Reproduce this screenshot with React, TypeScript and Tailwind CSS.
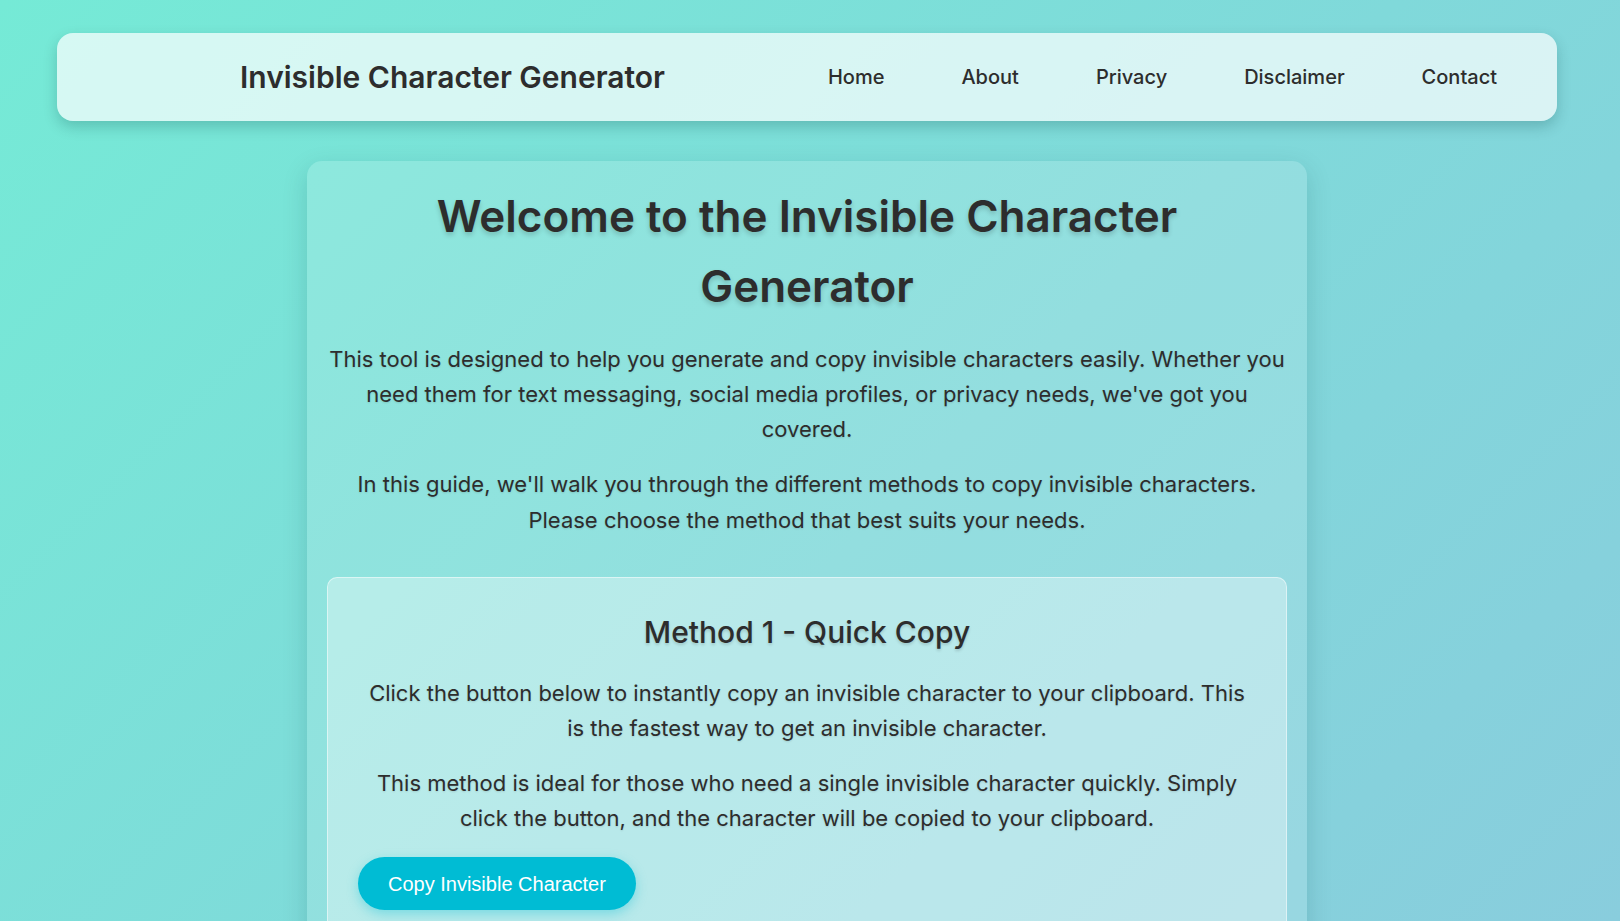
export default function App() {
  return (
    <div className="h-screen overflow-hidden bg-[linear-gradient(135deg,#75ead6_0%,#80d9da_55%,#89cddd_100%)] pr-[6px] font-['Inter',sans-serif] text-[#2d2d2d]">
      {/* Top navigation */}
      <header className="mx-auto mt-[33px] flex h-[88px] w-[1500px] items-center justify-between rounded-2xl bg-white/70 pl-[183px] pr-[60px] shadow-[0_6px_14px_rgba(0,60,60,0.22)]">
        <h1 className="text-[30px] font-semibold">Invisible Character Generator</h1>
        <nav className="flex items-center gap-[77px] text-[20px] font-medium">
          <a href="#">Home</a>
          <a href="#">About</a>
          <a href="#">Privacy</a>
          <a href="#">Disclaimer</a>
          <a href="#">Contact</a>
        </nav>
      </header>

      {/* Main card */}
      <main className="mx-auto mt-[40px] w-[1000px] rounded-[15px] bg-white/15 p-5 text-center leading-[1.6] shadow-[0_8px_24px_rgba(0,70,80,0.18)]">
        <h2 className="text-[44px] font-semibold [text-shadow:0_3px_5px_rgba(0,0,0,0.18)]">
          Welcome to the Invisible Character Generator
        </h2>
        <p className="mt-5 text-[22px] [text-shadow:0_1px_2px_rgba(0,0,0,0.12)]">
          This tool is designed to help you generate and copy invisible characters easily. Whether you need them for text
          messaging, social media profiles, or privacy needs, we've got you covered.
        </p>
        <p className="mt-5 text-[22px] [text-shadow:0_1px_2px_rgba(0,0,0,0.12)]">
          In this guide, we'll walk you through the different methods to copy invisible characters. Please choose the
          method that best suits your needs.
        </p>

        <section className="mt-[39px] rounded-[10px] border border-white/50 bg-white/35 p-[30px]">
          <h3 className="text-[30px] font-medium [text-shadow:0_2px_3px_rgba(0,0,0,0.15)]">Method 1 - Quick Copy</h3>
          <p className="mt-5 text-[22px] [text-shadow:0_1px_2px_rgba(0,0,0,0.12)]">
            Click the button below to instantly copy an invisible character to your clipboard. This is the fastest way to
            get an invisible character.
          </p>
          <p className="mt-5 text-[22px] [text-shadow:0_1px_2px_rgba(0,0,0,0.12)]">
            This method is ideal for those who need a single invisible character quickly. Simply click the button, and the
            character will be copied to your clipboard.
          </p>
          <div className="mt-[21px] text-left">
            <button className="h-[53px] rounded-full bg-[#00bcd4] px-[30px] font-['Liberation_Sans',Arial,sans-serif] text-[20px] leading-none text-white shadow-[0_4px_12px_rgba(0,188,212,0.35)]">
              Copy Invisible Character
            </button>
          </div>
          <div className="h-[200px]" />
        </section>
      </main>
    </div>
  );
}
